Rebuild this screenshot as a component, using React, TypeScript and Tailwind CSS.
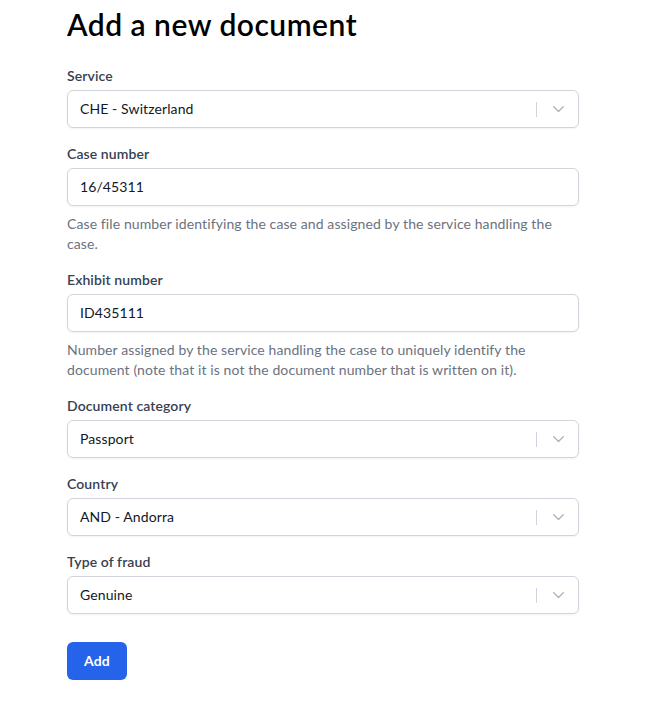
import React from "react";

const font = { fontFamily: "Lato, 'Noto Sans', sans-serif" };

function Chevron() {
  return (
    <svg width="11" height="7" viewBox="0 0 11 7" fill="none">
      <path d="M0.75 0.75 L5.5 5.5 L10.25 0.75" stroke="#b3b3b3" strokeWidth="1.4" strokeLinecap="round" strokeLinejoin="round" />
    </svg>
  );
}

function SelectField({ label, value }: { label: string; value: string }) {
  return (
    <div className="flex flex-col">
      <label className="text-sm leading-5 font-semibold text-[#374151] mb-1 tracking-[0.1px]">{label}</label>
      <div className="h-[38px] flex items-center border border-[#d1d5db] rounded-md bg-white shadow-[0_1px_2px_rgba(0,0,0,0.05)]">
        <div className="flex-1 pl-3 text-sm text-[#111827] tracking-[0.1px]">{value}</div>
        <div className="w-px h-[15px] bg-[#cfd4dc]" />
        <div className="w-[41px] flex items-center justify-center pl-[1px]">
          <Chevron />
        </div>
      </div>
    </div>
  );
}

function InputField({ label, value, help }: { label: string; value: string; help: string }) {
  return (
    <div className="flex flex-col">
      <label className="text-sm leading-5 font-semibold text-[#374151] mb-1 tracking-[0.1px]">{label}</label>
      <div className="h-[38px] flex items-center border border-[#d1d5db] rounded-md bg-white pl-3 text-sm text-[#111827] tracking-[0.1px] shadow-[0_1px_2px_rgba(0,0,0,0.05)]">
        {value}
      </div>
      <p className="mt-2 text-sm leading-5 text-[#6b7280] tracking-[0.1px]">{help}</p>
    </div>
  );
}

export default function App() {
  return (
    <div className="min-h-screen bg-white" style={font}>
      <div className="w-[512px] ml-[67px] pt-[6px]">
        <h1 className="text-[30px] leading-9 font-semibold text-black mb-6 tracking-[0.5px]">Add a new document</h1>
        <div className="flex flex-col gap-4">
          <SelectField label="Service" value="CHE - Switzerland" />
          <InputField
            label="Case number"
            value="16/45311"
            help="Case file number identifying the case and assigned by the service handling the case."
          />
          <InputField
            label="Exhibit number"
            value="ID435111"
            help="Number assigned by the service handling the case to uniquely identify the document (note that it is not the document number that is written on it)."
          />
          <SelectField label="Document category" value="Passport" />
          <SelectField label="Country" value="AND - Andorra" />
          <SelectField label="Type of fraud" value="Genuine" />
        </div>
        <button className="mt-7 h-[38px] px-[17px] rounded-md bg-[#2563eb] text-white text-sm font-bold tracking-[0.1px]">Add</button>
      </div>
    </div>
  );
}
